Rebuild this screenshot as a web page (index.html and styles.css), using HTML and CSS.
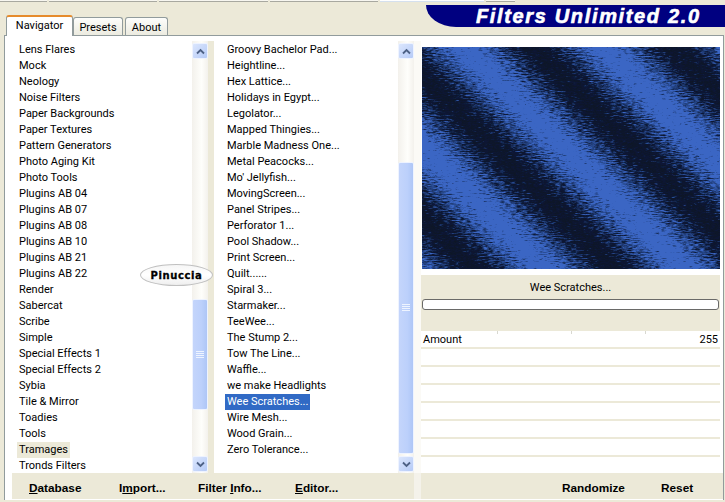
FILE: index.html
```html
<!DOCTYPE html>
<html lang="en">
<head>
<meta charset="utf-8">
<title>Filters Unlimited 2.0</title>
<link rel="stylesheet" href="styles.css">
</head>
<body>
<div class="app">
  <div class="topline">
    <span class="seg seg-1"></span>
    <span class="seg seg-2"></span>
    <span class="seg seg-3"></span>
    <span class="seg seg-4"></span>
    <span class="seg seg-5"></span>
    <span class="seg seg-6"></span>
  </div>
  <header class="top">
    <nav class="tabs">
      <span class="tab tab-active">Navigator</span>
      <span class="tab tab-presets">Presets</span>
      <span class="tab tab-about">About</span>
    </nav>
    <div class="banner"><span class="banner-text">Filters Unlimited 2.0</span></div>
  </header>
  <main class="panel">
    <div class="columns">
      <section class="listbox">
        <ul class="list">
          <li><span class="item">Lens Flares</span></li>
          <li><span class="item">Mock</span></li>
          <li><span class="item">Neology</span></li>
          <li><span class="item">Noise Filters</span></li>
          <li><span class="item">Paper Backgrounds</span></li>
          <li><span class="item">Paper Textures</span></li>
          <li><span class="item">Pattern Generators</span></li>
          <li><span class="item">Photo Aging Kit</span></li>
          <li><span class="item">Photo Tools</span></li>
          <li><span class="item">Plugins AB 04</span></li>
          <li><span class="item">Plugins AB 07</span></li>
          <li><span class="item">Plugins AB 08</span></li>
          <li><span class="item">Plugins AB 10</span></li>
          <li><span class="item">Plugins AB 21</span></li>
          <li><span class="item">Plugins AB 22</span></li>
          <li><span class="item">Render</span></li>
          <li><span class="item">Sabercat</span></li>
          <li><span class="item">Scribe</span></li>
          <li><span class="item">Simple</span></li>
          <li><span class="item">Special Effects 1</span></li>
          <li><span class="item">Special Effects 2</span></li>
          <li><span class="item">Sybia</span></li>
          <li><span class="item">Tile &amp; Mirror</span></li>
          <li><span class="item">Toadies</span></li>
          <li><span class="item">Tools</span></li>
          <li><span class="item item-current">Tramages</span></li>
          <li><span class="item">Tronds Filters</span></li>
        </ul>
        <div class="scrollbar">
          <div class="sb-btn"><svg class="chev" viewBox="0 0 9 7"><path d="M1 5.500 4.500 2 8 5.500"/></svg></div>
          <div class="sb-gap sb-gap-a"></div>
          <div class="sb-thumb sb-thumb-a"><svg class="grip" viewBox="0 0 8 8"><path d="M0 .5h8M0 2.500h8M0 4.500h8M0 6.500h8"/></svg></div>
          <div class="sb-fill"></div>
          <div class="sb-btn"><svg class="chev" viewBox="0 0 9 7"><path d="M1 1.500 4.500 5 8 1.500"/></svg></div>
        </div>
      </section>
      <div class="gutter gutter-beige"></div>
      <section class="listbox">
        <ul class="list">
          <li><span class="item">Groovy Bachelor Pad...</span></li>
          <li><span class="item">Heightline...</span></li>
          <li><span class="item">Hex Lattice...</span></li>
          <li><span class="item">Holidays in Egypt...</span></li>
          <li><span class="item">Legolator...</span></li>
          <li><span class="item">Mapped Thingies...</span></li>
          <li><span class="item">Marble Madness One...</span></li>
          <li><span class="item">Metal Peacocks...</span></li>
          <li><span class="item">Mo' Jellyfish...</span></li>
          <li><span class="item">MovingScreen...</span></li>
          <li><span class="item">Panel Stripes...</span></li>
          <li><span class="item">Perforator 1...</span></li>
          <li><span class="item">Pool Shadow...</span></li>
          <li><span class="item">Print Screen...</span></li>
          <li><span class="item">Quilt......</span></li>
          <li><span class="item">Spiral 3...</span></li>
          <li><span class="item">Starmaker...</span></li>
          <li><span class="item">TeeWee...</span></li>
          <li><span class="item">The Stump 2...</span></li>
          <li><span class="item">Tow The Line...</span></li>
          <li><span class="item">Waffle...</span></li>
          <li><span class="item">we make Headlights</span></li>
          <li><span class="item item-selected">Wee Scratches...</span></li>
          <li><span class="item">Wire Mesh...</span></li>
          <li><span class="item">Wood Grain...</span></li>
          <li><span class="item">Zero Tolerance...</span></li>
        </ul>
        <div class="scrollbar">
          <div class="sb-btn"><svg class="chev" viewBox="0 0 9 7"><path d="M1 5.500 4.500 2 8 5.500"/></svg></div>
          <div class="sb-gap sb-gap-b"></div>
          <div class="sb-thumb sb-thumb-b"><svg class="grip" viewBox="0 0 8 8"><path d="M0 .5h8M0 2.500h8M0 4.500h8M0 6.500h8"/></svg></div>
          <div class="sb-fill"></div>
          <div class="sb-btn"><svg class="chev" viewBox="0 0 9 7"><path d="M1 1.500 4.500 5 8 1.500"/></svg></div>
        </div>
      </section>
      <div class="gutter"></div>
      <section class="side">
        <svg class="preview" viewBox="0 0 298 222" aria-label="Filter preview">
          <defs>
            <linearGradient id="bands" gradientUnits="userSpaceOnUse" x1="111" y1="0" x2="181" y2="-70" spreadMethod="repeat">
              <stop offset="0" stop-color="#081228"/>
              <stop offset="0.14" stop-color="#0c1a38"/>
              <stop offset="0.38" stop-color="#3a66c4"/>
              <stop offset="0.62" stop-color="#3a66c4"/>
              <stop offset="0.86" stop-color="#0c1a38"/>
              <stop offset="1" stop-color="#081228"/>
            </linearGradient>
            <filter id="scratch" x="-10%" y="-10%" width="120%" height="120%">
              <feTurbulence type="fractalNoise" baseFrequency="0.18 0.95" numOctaves="3" seed="4" result="noise"/>
              <feDisplacementMap in="SourceGraphic" in2="noise" scale="54" xChannelSelector="R" yChannelSelector="A"/>
            </filter>
          </defs>
          <rect x="-30" y="-30" width="358" height="282" fill="url(#bands)" filter="url(#scratch)"/>
        </svg>
        <div class="info">
          <div class="filter-name">Wee Scratches...</div>
          <div class="progress"></div>
        </div>
        <div class="sliders">
          <div class="row row-first"><span>Amount</span><span>255</span></div>
          <div class="row"></div>
          <div class="row"></div>
          <div class="row"></div>
          <div class="row"></div>
          <div class="row"></div>
          <div class="row"></div>
          <div class="row row-last"></div>
        </div>
      </section>
    </div>
    <footer class="footer">
      <div class="actions">
        <span class="btn btn-db"><u>D</u>atabase</span>
        <span class="btn btn-imp">I<u>m</u>port...</span>
        <span class="btn btn-info">Filter <u>I</u>nfo...</span>
        <span class="btn"><u>E</u>ditor...</span>
      </div>
      <div class="gutter gutter-foot"></div>
      <div class="actions actions-right">
        <span class="btn btn-rand">Randomize</span>
        <span class="btn">Reset</span>
      </div>
    </footer>
  </main>
  <div class="stamp"><span>Pinuccia</span></div>
</div>
</body>
</html>
```
FILE: styles.css
```css
* { box-sizing: border-box; }
html, body { margin: 0; padding: 0; }
body {
  width: 725px;
  height: 502px;
  overflow: hidden;
  background: #ece9d8;
  font-family: Roboto, "Liberation Sans", Arial, sans-serif;
  font-size: 11px;
  color: #000;
}
.app { position: relative; width: 725px; height: 502px; display: flex; flex-direction: column; }
.topline { height: 2px; display: flex; gap: 2px; }
.seg { height: 2px; background: #f7f6f0; border-bottom: 1px solid #a8a8a0; }
.seg-1 { width: 47px; }
.seg-2 { width: 108px; }
.seg-3 { width: 109px; }
.seg-4 { width: 108px; }
.seg-5 { width: 104px; background: #fff; border-bottom-color: #d5e0ee; }
.seg-6 { width: 29px; }
.top { height: 33px; display: flex; justify-content: space-between; align-items: flex-start; padding-left: 6px; }
.tabs { display: flex; align-items: flex-end; height: 33px; }
.tab {
  display: flex; align-items: center; justify-content: center;
  height: 18px; padding-top: 2px;
  border: 1px solid #919b9c; border-bottom: 0;
  border-radius: 3px 3px 0 0;
  background: linear-gradient(#fdfdfb, #ecebe0);
}
.tab-active {
  position: relative;
  width: 67px; height: 21px; background: #fff;
  border-top: 2px solid #e68b2c;
  margin-bottom: -1px;
  padding: 0 0 2px;
  z-index: 2;
}
.tab-presets { width: 50px; }
.tab-about { width: 43px; margin-left: 2px; }
.banner {
  width: 299px; height: 22px; margin-top: 3px;
  background: #000080;
  border-bottom-left-radius: 30px 22px;
  display: flex; align-items: center; padding-left: 50px;
}
.banner-text {
  font-family: "Liberation Sans", Arial, sans-serif;
  color: #fff; font-weight: bold; font-style: italic;
  font-size: 20px; letter-spacing: 1.65px; white-space: nowrap;
  -webkit-text-stroke: 0.6px #fff;
}
.panel {
  width: 720px; height: 465px; margin-left: 4px;
  background: #fff;
  border: 1px solid #919b9c;
  border-bottom: 0;
  display: flex; flex-direction: column;
  padding-left: 7px;
}
.columns { display: flex; height: 437px; }
.listbox { display: flex; height: 437px; overflow: hidden; }
.listbox:first-child { width: 196px; }
.listbox:nth-child(3) { width: 200px; }
.list {
  list-style: none; margin: 0; padding: 6px 0 0 5px;
  flex: 1; overflow: hidden; line-height: 16px;
}
.listbox:nth-child(3) .list { padding-left: 11px; }
.list li { height: 16px; white-space: nowrap; }
.item { display: inline-block; height: 16px; padding: 0 2px; }
.item-current { background: #ece9d8; }
.item-selected { background: #316ac5; color: #fff; }
.scrollbar {
  width: 16px; flex: none; display: flex; flex-direction: column;
  margin-top: 5px;
  padding: 2px 0 1px;
  background: linear-gradient(90deg, #f3f1ec, #fefefb 60%, #f3f1ec);
}
.sb-btn {
  width: 16px; height: 16px; flex: none;
  border: 1px solid #eef3ff; border-radius: 2px;
  background: linear-gradient(135deg, #dbe6fd, #b6cbf7);
  display: flex; align-items: center; justify-content: center;
}
.chev { width: 9px; height: 7px; fill: none; stroke: #4d6185; stroke-width: 1.8; }
.sb-fill { flex: 1; }
.sb-gap-a { height: 240px; }
.sb-gap-b { height: 103px; }
.sb-thumb {
  flex: none; width: 16px;
  border: 1px solid #eef3ff; border-radius: 2px;
  background: linear-gradient(90deg, #c4d5fb, #bcd0fb 60%, #aec6f6);
  display: flex; align-items: center; justify-content: center;
}
.sb-thumb-a { height: 111px; }
.sb-thumb-b { height: 292px; }
.grip { width: 8px; height: 8px; stroke: #eef4ff; stroke-width: 1; fill: none; }
.gutter { width: 7px; flex: none; background: #fbfaf6; margin-top: 5px; }
.gutter-beige { width: 6px; background: #ece9d8; }
.side { width: 299px; flex: none; display: flex; flex-direction: column; padding-top: 11px; }
.preview { display: block; width: 298px; height: 222px; margin-left: 1px; flex: none; }
.info { margin-top: 6px; height: 56px; background: #ece9d8; padding-top: 6px; }
.filter-name { text-align: center; height: 17px; line-height: 14px; }
.progress {
  height: 11px; margin: 1px 1px 0 1px;
  background: #fff; border: 1px solid #6a6a68; border-radius: 3px;
}
.sliders { display: flex; flex-direction: column; }
.row {
  height: 18px; flex: none; border-bottom: 2px solid #ece9d8;
  display: flex; justify-content: space-between; padding: 1px 2px 0;
  line-height: 16px;
  background: #fff;
}
.row-first {
  background-image:
    linear-gradient(#d8d8d0, #d8d8d0), linear-gradient(#d8d8d0, #d8d8d0), linear-gradient(#d8d8d0, #d8d8d0);
  background-size: 1px 3px;
  background-repeat: no-repeat;
  background-position: 76px 0, 150px 0, 224px 0;
}
.row-last { height: 16px; border-bottom: 0; }
.footer {
  display: flex; height: 27px; background: #ece9d8; margin-bottom: 1px;
  font-family: "Liberation Sans", Arial, sans-serif; font-size: 11.8px;
}
.actions { width: 402px; flex: none; display: flex; align-items: center; padding: 3px 0 0 17px; font-weight: bold; }
.footer .gutter-foot { background: #f4f2ea; margin-top: 0; }
.actions-right { width: 298px; padding-left: 141px; }
.btn { white-space: nowrap; }
.btn-db { width: 90px; }
.btn-imp { width: 79px; }
.btn-info { width: 97px; }
.btn-rand { width: 99px; }
.stamp {
  position: absolute; left: 140px; top: 264px; width: 73px; height: 22px;
  border-radius: 50%;
  border: 1px solid #c0c0c0;
  background: linear-gradient(#f6f6f6, #fff 50%, #eee);
  display: flex; align-items: center; justify-content: center;
  font-family: "DejaVu Sans", sans-serif; font-weight: bold; font-size: 10px; letter-spacing: .6px;
  color: #000;
  -webkit-text-stroke: 0.3px #000;
}
```
